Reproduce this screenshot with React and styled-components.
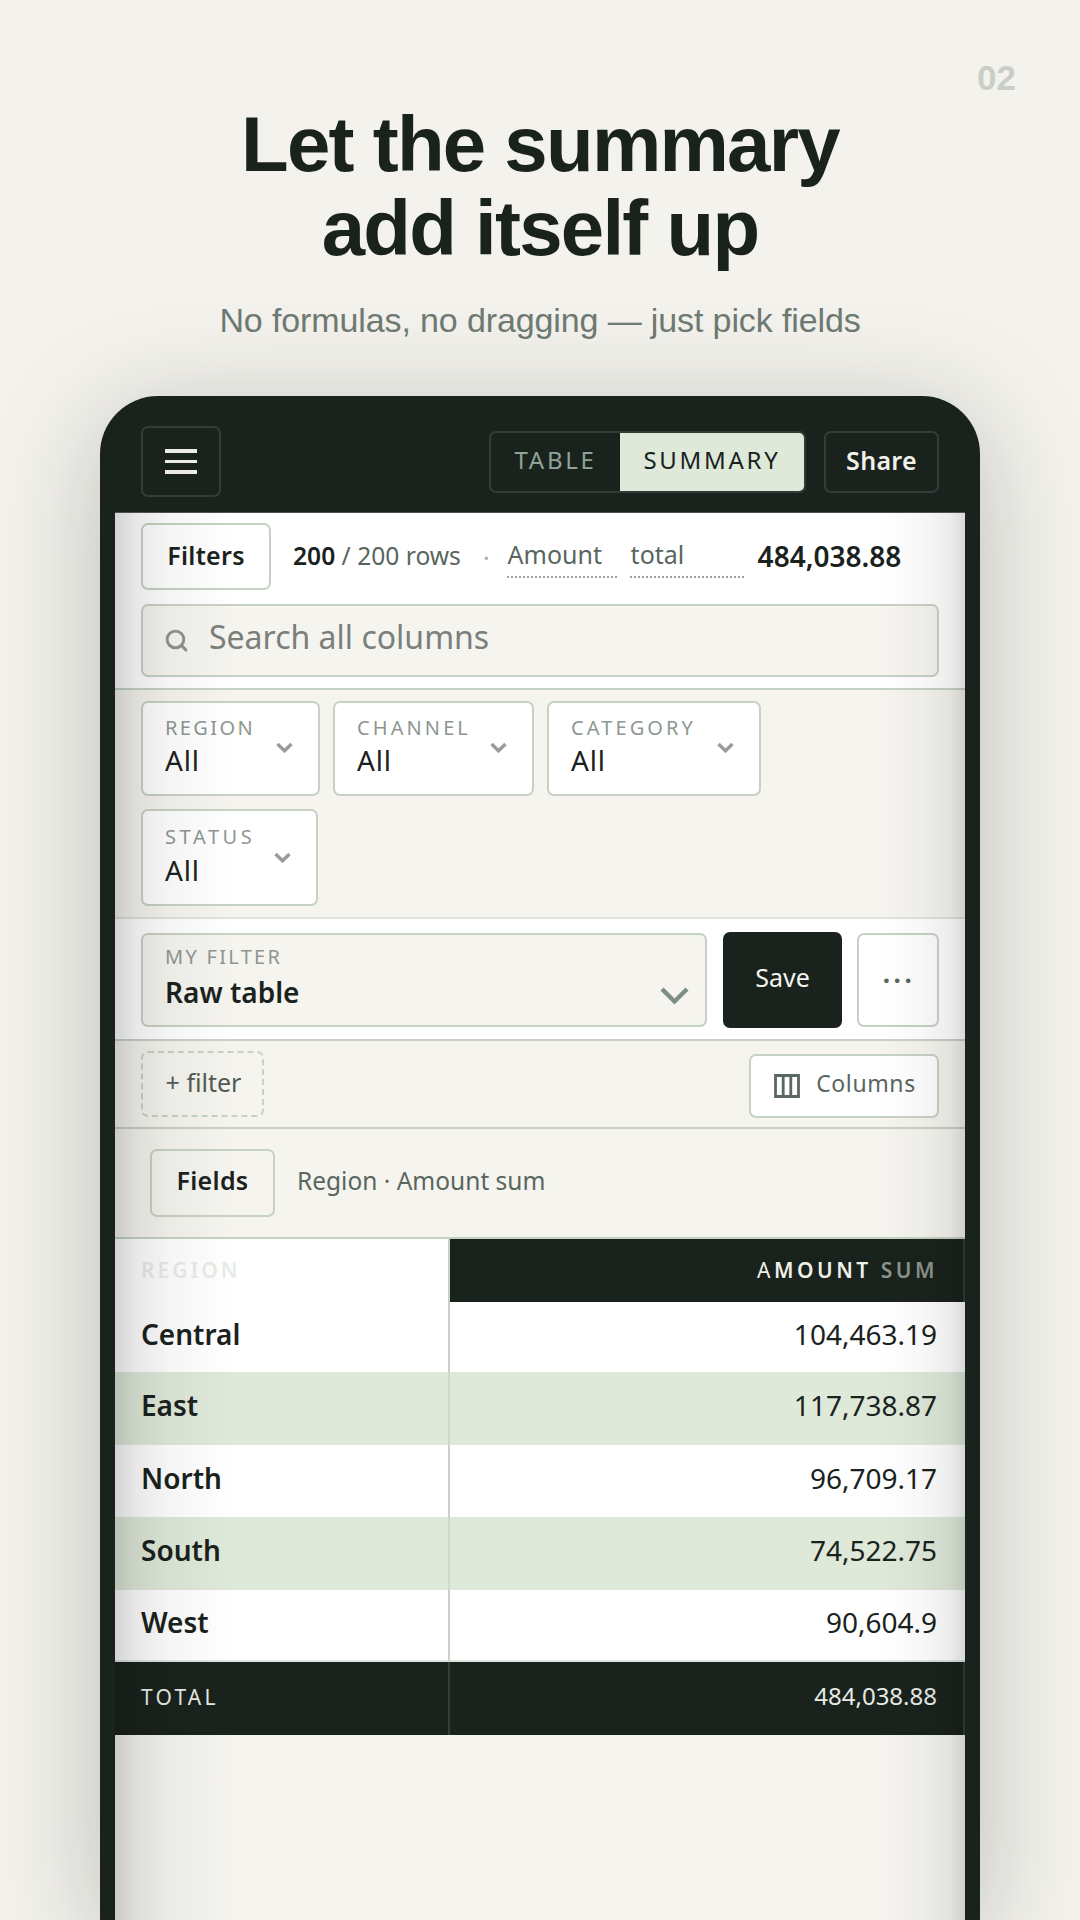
import React from 'react';
import styled, { createGlobalStyle } from 'styled-components';
import { Search } from 'lucide-react';

const INK = '#1a221d';
const LINE = '#c6d2c3';
const PAPER = '#f5f4ef';
const MINT = '#dfe9d9';
const DIM = '#2f3f38';
const UI = '"Noto Sans", "Open Sans", sans-serif';

const GlobalStyle = createGlobalStyle`
    html, body {
        margin: 0;
        padding: 0;
        background: #f3f2ed;
    }
`;

const Page = styled.div`
    width: 1080px;
    height: 1920px;
    overflow: hidden;
    display: flex;
    flex-direction: column;
    align-items: center;
    background: #f3f2ed;
    font-family: "Liberation Sans", Arial, sans-serif;
`;

const PageNumber = styled.div`
    align-self: flex-end;
    margin: 60px 64px 0 0;
    font-size: 35px;
    line-height: 36px;
    font-weight: 700;
    color: #c9cfc6;
`;

const Title = styled.h1`
    margin: 6px 0 0;
    font-size: 78px;
    line-height: 84px;
    font-weight: 700;
    letter-spacing: -1.75px;
    text-align: center;
    color: ${INK};
`;

const Subtitle = styled.p`
    margin: 30px 0 0;
    font-size: 34px;
    line-height: 40px;
    letter-spacing: -0.12px;
    color: #6f7a72;
`;

const Phone = styled.div`
    flex: 1;
    width: 880px;
    box-sizing: border-box;
    margin-top: 56px;
    padding: 15px 15px 0;
    display: flex;
    flex-direction: column;
    background: ${INK};
    border-radius: 58px 58px 0 0;
    box-shadow: 0 20px 110px rgba(26, 34, 29, 0.25);
    font-family: ${UI};
`;

const Header = styled.header`
    flex: none;
    height: 101px;
    box-sizing: border-box;
    padding: 0 26px;
    display: flex;
    align-items: center;
    gap: 18px;
`;

const MenuButton = styled.button`
    width: 80px;
    height: 71px;
    margin-right: auto;
    padding: 0;
    display: flex;
    flex-direction: column;
    align-items: center;
    justify-content: center;
    gap: 7px;
    background: transparent;
    border: 2px solid ${DIM};
    border-radius: 7px;
`;

const MenuLine = styled.span`
    width: 32px;
    height: 3.5px;
    background: #ecece4;
`;

const Tabs = styled.div`
    height: 62px;
    box-sizing: border-box;
    display: flex;
    border: 2px solid ${DIM};
    border-radius: 7px;
    overflow: hidden;
`;

const Tab = styled.div`
    width: ${(p) => p.$width}px;
    box-sizing: border-box;
    padding-bottom: 4px;
    display: flex;
    align-items: center;
    justify-content: center;
    font-size: 24px;
    letter-spacing: 2.7px;
    background: ${(p) => (p.$active ? MINT : 'transparent')};
    color: ${(p) => (p.$active ? INK : '#8fa398')};
`;

const ShareButton = styled.button`
    width: 115px;
    height: 62px;
    padding: 0 0 4px;
    font-family: inherit;
    font-size: 25px;
    font-weight: 600;
    letter-spacing: 0.3px;
    color: #f1f1ea;
    background: transparent;
    border: 2px solid ${DIM};
    border-radius: 7px;
`;

const Screen = styled.main`
    position: relative;
    flex: 1;
    display: flex;
    flex-direction: column;
    border-top: 1px solid #4a544e;
    background: ${PAPER};

    &::after {
        content: '';
        position: absolute;
        inset: 0;
        pointer-events: none;
        background:
            linear-gradient(90deg, rgba(0, 0, 0, 0.17) 0, rgba(0, 0, 0, 0.09) 22px, rgba(0, 0, 0, 0.04) 55px, rgba(0, 0, 0, 0) 120px),
            linear-gradient(270deg, rgba(0, 0, 0, 0.15) 0, rgba(0, 0, 0, 0.07) 16px, rgba(0, 0, 0, 0.03) 42px, rgba(0, 0, 0, 0) 85px);
    }
`;

const SummaryBar = styled.section`
    padding: 10px 26px 11px;
    display: flex;
    flex-direction: column;
    gap: 14px;
    background: #fff;
    border-bottom: 2px solid ${LINE};
`;

const StatsRow = styled.div`
    display: flex;
    align-items: center;
    height: 67px;
`;

const PlainButton = styled.button`
    box-sizing: border-box;
    padding: 0 0 4px;
    font-family: inherit;
    font-size: 25px;
    font-weight: 600;
    letter-spacing: 0.3px;
    color: ${INK};
    background: transparent;
    border: 2px solid ${LINE};
    border-radius: 7px;
`;

const FiltersButton = styled(PlainButton)`
    width: 130px;
    height: 67px;
    margin-right: 22px;
`;

const Count = styled.span`
    padding-bottom: 2px;
    font-size: 24.6px;
    color: #59665e;

    b {
        font-weight: 600;
        color: ${INK};
    }
`;

const Separator = styled.span`
    margin: 0 17px 0 22px;
    font-size: 25px;
    color: #a5ada7;
`;

const Picker = styled.span`
    box-sizing: border-box;
    width: ${(p) => p.$width}px;
    height: 43px;
    margin-right: ${(p) => p.$gap}px;
    padding-left: 1px;
    font-size: 25px;
    line-height: 38px;
    color: #59665e;
    border-bottom: 2px dotted #9aa39c;
`;

const TotalValue = styled.strong`
    padding-bottom: 2px;
    font-size: 28px;
    font-weight: 600;
    color: ${INK};
`;

const SearchBox = styled.div`
    height: 73px;
    box-sizing: border-box;
    padding: 0 0 0 21px;
    display: flex;
    align-items: center;
    gap: 20px;
    font-size: 32px;
    color: #7a7f7c;
    background: ${PAPER};
    border: 2px solid ${LINE};
    border-radius: 7px;

    span {
        padding-bottom: 9px;
    }

    svg {
        flex: none;
    }
`;

const FilterGrid = styled.section`
    padding: 11px 26px;
    display: flex;
    flex-wrap: wrap;
    gap: 13px;
    border-bottom: 2px solid #dfe4dc;
`;

const SelectCard = styled.div`
    box-sizing: border-box;
    width: ${(p) => p.$width}px;
    height: ${(p) => (p.$tall ? 97 : 95)}px;
    padding: ${(p) => (p.$tall ? 12 : 11)}px 25px 0 22px;
    display: flex;
    align-items: flex-start;
    justify-content: space-between;
    background: #fff;
    border: 2px solid ${LINE};
    border-radius: 7px;
`;

const FieldText = styled.div`
    display: flex;
    flex-direction: column;
`;

const FieldLabel = styled.span`
    font-size: 20px;
    line-height: 28px;
    letter-spacing: ${(p) => p.$spacing}px;
    color: #8d9790;
`;

const FieldValue = styled.span`
    font-size: 28px;
    line-height: ${(p) => (p.$tall ? 38 : 36)}px;
    letter-spacing: 0.8px;
    color: ${INK};
`;

const Chevron = styled.svg`
    flex: none;
    margin-top: ${(p) => p.$top}px;
    fill: none;
    stroke: ${(p) => p.$color};
    stroke-width: ${(p) => p.$weight};
`;

const SavedRow = styled.section`
    padding: 14px 26px 12px;
    display: flex;
    gap: 16px;
    background: #fff;
    border-bottom: 2px solid ${LINE};
`;

const SavedField = styled.div`
    flex: 1;
    height: 94px;
    box-sizing: border-box;
    padding: 8px 16px 0 22px;
    display: flex;
    align-items: flex-start;
    justify-content: space-between;
    background: ${PAPER};
    border: 2px solid ${LINE};
    border-radius: 7px;
`;

const SavedValue = styled.span`
    font-size: 28px;
    line-height: 42px;
    font-weight: 600;
    color: ${INK};
`;

const SaveButton = styled.button`
    width: 119px;
    height: 96px;
    margin: -1px 0;
    padding: 0 0 6px;
    font-family: inherit;
    font-size: 25px;
    color: #f5f4ef;
    background: ${INK};
    border: 0;
    border-radius: 7px;
`;

const MoreButton = styled.button`
    width: 82px;
    height: 94px;
    margin-left: -1px;
    padding: 0 0 0 2px;
    font-family: inherit;
    font-size: 26px;
    font-weight: 700;
    letter-spacing: 3.6px;
    color: #59665e;
    background: #fff;
    border: 2px solid ${LINE};
    border-radius: 7px;
`;

const ActionRow = styled.section`
    height: 88px;
    box-sizing: border-box;
    padding: 0 26px;
    display: flex;
    align-items: center;
    justify-content: space-between;
    border-bottom: 2px solid ${LINE};
`;

const AddFilter = styled.button`
    width: 123px;
    height: 66px;
    padding: 0 0 4px 2px;
    font-family: inherit;
    font-size: 25px;
    color: #4f5c54;
    background: transparent;
    border: 2px dashed ${LINE};
    border-radius: 7px;
`;

const ColumnsButton = styled.button`
    width: 190px;
    height: 64px;
    margin-top: 3px;
    padding: 0 0 0 2px;
    display: flex;
    align-items: center;
    justify-content: center;
    gap: 16px;
    font-family: inherit;
    font-size: 23px;
    letter-spacing: 0.6px;
    color: #59665e;
    background: #fff;
    border: 2px solid ${LINE};
    border-radius: 7px;

    span {
        padding-bottom: 5px;
    }
`;

const ColumnsIcon = styled.svg`
    flex: none;
    fill: none;
    stroke: #5a6860;
    stroke-width: 2.8;
`;

const FieldsRow = styled.section`
    height: 110px;
    box-sizing: border-box;
    padding: 0 35px;
    display: flex;
    align-items: center;
    gap: 22px;
    border-bottom: 2px solid ${LINE};
`;

const FieldsButton = styled(PlainButton)`
    width: 125px;
    height: 68px;
    padding-bottom: 6px;
`;

const FieldsSummary = styled.span`
    padding-bottom: 6px;
    font-size: 24.5px;
    color: #59665e;
`;

const Table = styled.div`
    display: grid;
    grid-template-columns: 335px 1fr;
`;

const Cell = styled.div`
    box-sizing: border-box;
    height: ${(p) => p.$height}px;
    padding-bottom: 7px;
    display: flex;
    align-items: center;
    background: ${(p) => (p.$alt ? MINT : '#fff')};
    border-bottom: ${(p) => (p.$last ? '2px solid #e0e4de' : '0')};
    color: ${INK};
    font-size: 28px;
`;

const NameCell = styled(Cell)`
    padding-left: 26px;
    font-weight: 600;
    border-right: 2px solid ${(p) => (p.$alt ? '#cfdbca' : LINE)};
`;

const ValueCell = styled(Cell)`
    justify-content: flex-end;
    padding-right: 28px;
`;

const HeadName = styled(NameCell)`
    padding-bottom: 2px;
    font-size: 21px;
    letter-spacing: 3px;
    color: #e8ece6;
`;

const HeadValue = styled(ValueCell)`
    padding: 0 25px 2px 0;
    font-size: 21px;
    font-weight: 600;
    letter-spacing: 3.5px;
    color: #eef0ea;
    background: ${INK};
    border-right: 2px solid ${DIM};
`;

const HeadInitial = styled.span`
    font-weight: 400;
`;

const HeadMuted = styled.span`
    margin-left: 9px;
    color: #8a938d;
`;

const TotalName = styled(NameCell)`
    padding-bottom: 4px;
    font-size: 21px;
    font-weight: 400;
    letter-spacing: 3.2px;
    color: #e6ebe4;
    background: ${INK};
    border-right-color: ${DIM};
`;

const TotalCell = styled(ValueCell)`
    padding: 0 26px 6px 0;
    font-size: 24px;
    color: #e6ebe4;
    background: ${INK};
    border-right: 2px solid ${DIM};
`;

const ROWS = [
    ['Central', '104,463.19', 70],
    ['East', '117,738.87', 73],
    ['North', '96,709.17', 72],
    ['South', '74,522.75', 73],
    ['West', '90,604.9', 72],
];

const SELECTS = [
    ['REGION', 179, 2.4],
    ['CHANNEL', 201, 3.1],
    ['CATEGORY', 214, 3.1],
    ['STATUS', 177, 3.6],
];

const SmallChevron = ({ top }) => (
    <Chevron width="17" height="11" viewBox="0 0 17 11" $top={top} $color="#9b9c9a" $weight={3.4}>
        <path d="M1.5 2 8.5 8.8 15.5 2" />
    </Chevron>
);

const App = () => (
    <Page>
        <GlobalStyle />
        <PageNumber>02</PageNumber>
        <Title>
            Let the summary
            <br />
            add itself up
        </Title>
        <Subtitle>No formulas, no dragging — just pick fields</Subtitle>
        <Phone>
            <Header>
                <MenuButton aria-label="Menu">
                    <MenuLine />
                    <MenuLine />
                    <MenuLine />
                </MenuButton>
                <Tabs>
                    <Tab $width={129}>TABLE</Tab>
                    <Tab $width={184} $active>SUMMARY</Tab>
                </Tabs>
                <ShareButton>Share</ShareButton>
            </Header>
            <Screen>
                <SummaryBar>
                    <StatsRow>
                        <FiltersButton>Filters</FiltersButton>
                        <Count>
                            <b>200</b> / 200 rows
                        </Count>
                        <Separator>·</Separator>
                        <Picker $width={110} $gap={13}>Amount</Picker>
                        <Picker $width={114} $gap={14}>total</Picker>
                        <TotalValue>484,038.88</TotalValue>
                    </StatsRow>
                    <SearchBox>
                        <Search size={25} color="#8c948f" strokeWidth={2.8} />
                        <span>Search all columns</span>
                    </SearchBox>
                </SummaryBar>
                <FilterGrid>
                    {SELECTS.map(([label, width, spacing]) => {
                        const tall = label === 'STATUS';
                        return (
                            <SelectCard key={label} $width={width} $tall={tall}>
                                <FieldText>
                                    <FieldLabel $spacing={spacing}>{label}</FieldLabel>
                                    <FieldValue $tall={tall}>All</FieldValue>
                                </FieldText>
                                <SmallChevron top={tall ? 29 : 28} />
                            </SelectCard>
                        );
                    })}
                </FilterGrid>
                <SavedRow>
                    <SavedField>
                        <FieldText>
                            <FieldLabel $spacing={2.3}>MY FILTER</FieldLabel>
                            <SavedValue>Raw table</SavedValue>
                        </FieldText>
                        <Chevron width="29" height="18" viewBox="0 0 29 18" $top={44} $color="#7f8e85" $weight={4.4}>
                            <path d="M2 2 14.5 14.5 27 2" />
                        </Chevron>
                    </SavedField>
                    <SaveButton>Save</SaveButton>
                    <MoreButton aria-label="More">···</MoreButton>
                </SavedRow>
                <ActionRow>
                    <AddFilter>+ filter</AddFilter>
                    <ColumnsButton>
                        <ColumnsIcon width="26" height="24" viewBox="0 0 26 24">
                            <path d="M1.5 1.5h23v21h-23zM9.2 1.5v21M16.8 1.5v21" />
                        </ColumnsIcon>
                        <span>Columns</span>
                    </ColumnsButton>
                </ActionRow>
                <FieldsRow>
                    <FieldsButton>Fields</FieldsButton>
                    <FieldsSummary>Region · Amount sum</FieldsSummary>
                </FieldsRow>
                <Table>
                    <HeadName $height={63}>REGION</HeadName>
                    <HeadValue $height={63}>
                        <HeadInitial>A</HeadInitial>MOUNT<HeadMuted>SUM</HeadMuted>
                    </HeadValue>
                    {ROWS.map(([name, value, height], i) => (
                        <React.Fragment key={name}>
                            <NameCell $height={height} $alt={i % 2 === 1} $last={i === ROWS.length - 1}>{name}</NameCell>
                            <ValueCell $height={height} $alt={i % 2 === 1} $last={i === ROWS.length - 1}>{value}</ValueCell>
                        </React.Fragment>
                    ))}
                    <TotalName $height={73}>TOTAL</TotalName>
                    <TotalCell $height={73}>484,038.88</TotalCell>
                </Table>
            </Screen>
        </Phone>
    </Page>
);

export default App;
